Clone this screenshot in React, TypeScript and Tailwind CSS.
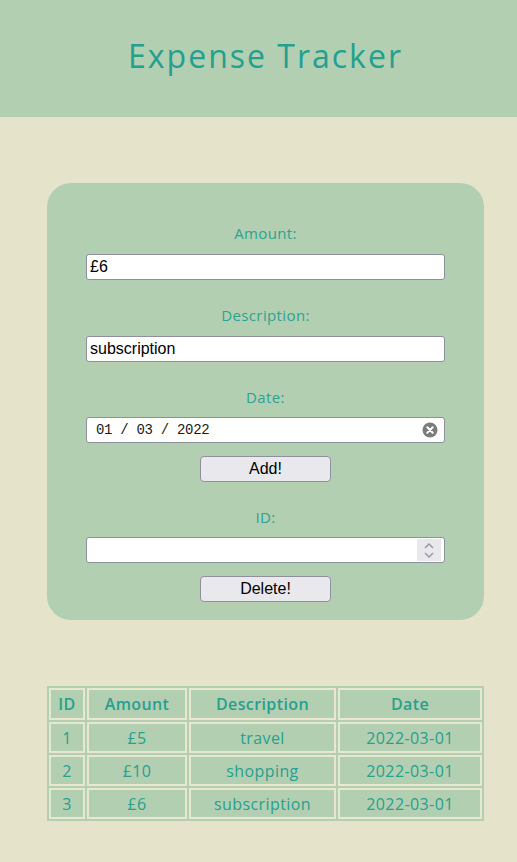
import { useState } from "react";

const rows = [
  { id: 1, amount: "£5", description: "travel", date: "2022-03-01" },
  { id: 2, amount: "£10", description: "shopping", date: "2022-03-01" },
  { id: 3, amount: "£6", description: "subscription", date: "2022-03-01" },
];

const Label = ({ children }: { children: string }) => (
  <label className="block text-center text-[15px] leading-5 tracking-wide text-[#2ba393]">{children}</label>
);

const inputBase =
  "block w-[359px] h-[26px] bg-white border border-[#8f8f9d] rounded-[3px] px-[3px] text-[16px] text-black font-['Liberation_Sans',Arial,sans-serif] outline-none";

const Button = ({ children }: { children: string }) => (
  <button className="block mx-auto w-[131px] h-[26px] bg-[#e9e9ed] border border-[#8f8f9d] rounded-[4px] text-[16px] text-black font-['Liberation_Sans',Arial,sans-serif]">
    {children}
  </button>
);

const App = () => {
  const [amount, setAmount] = useState("£6");
  const [description, setDescription] = useState("subscription");

  return (
    <div className="min-h-screen bg-[#e5e4cb] font-['Open_Sans',sans-serif] pb-10">
      <header className="h-[117px] bg-[#b3cfb1] flex items-center justify-center pl-[14px] pb-[6px]">
        <h1 className="text-[32px] tracking-[2px] text-[#23a090] font-normal">Expense Tracker</h1>
      </header>

      <div className="ml-[47px] w-[437px] mt-[66px] bg-[#b3cfb1] rounded-[24px] pt-[40px] pb-[18px] flex flex-col items-center">
        <Label>Amount:</Label>
        <input className={`${inputBase} mt-[11px]`} value={amount} onChange={(e) => setAmount(e.target.value)} />

        <div className="mt-[25px]">
          <Label>Description:</Label>
        </div>
        <input
          className={`${inputBase} mt-[11px]`}
          value={description}
          onChange={(e) => setDescription(e.target.value)}
        />

        <div className="mt-[25px]">
          <Label>Date:</Label>
        </div>
        <div className={`${inputBase} mt-[10px] flex items-center justify-between pl-[9px] pr-[6px]`}>
          <span className="font-['Liberation_Mono',monospace] text-[14px] tracking-[-0.3px] text-[#1a1a1a]">01 / 03 / 2022</span>
          <svg width="16" height="16" viewBox="0 0 16 16">
            <circle cx="8" cy="8" r="7.5" fill="#7b7b7b" />
            <path d="M5.3 5.3 L10.7 10.7 M10.7 5.3 L5.3 10.7" stroke="white" strokeWidth="2" strokeLinecap="round" />
          </svg>
        </div>

        <div className="mt-[13px]">
          <Button>Add!</Button>
        </div>

        <div className="mt-[25px]">
          <Label>ID:</Label>
        </div>
        <div className={`${inputBase} mt-[10px] flex items-stretch justify-end p-[1px]`}>
          <div className="w-[24px] bg-[#e9e9ed] flex flex-col items-center justify-center gap-[3px]">
            <svg width="10" height="6" viewBox="0 0 10 6">
              <path d="M1 5 L5 1 L9 5" stroke="#9a9aa6" strokeWidth="1.5" fill="none" />
            </svg>
            <svg width="10" height="6" viewBox="0 0 10 6">
              <path d="M1 1 L5 5 L9 1" stroke="#9a9aa6" strokeWidth="1.5" fill="none" />
            </svg>
          </div>
        </div>

        <div className="mt-[13px]">
          <Button>Delete!</Button>
        </div>
      </div>

      <table className="ml-[47px] w-[437px] mt-[66px] bg-[#b3cfb1] border-separate border-spacing-[2px] text-[16px] text-[#26a090] tracking-wide">
        <thead>
          <tr>
            <th className="w-[36px] h-[32px] border-2 border-[#e8e7cf] font-semibold">ID</th>
            <th className="w-[100px] border-2 border-[#e8e7cf] font-semibold">Amount</th>
            <th className="w-[147px] border-2 border-[#e8e7cf] font-semibold">Description</th>
            <th className="border-2 border-[#e8e7cf] font-semibold">Date</th>
          </tr>
        </thead>
        <tbody>
          {rows.map((r) => (
            <tr key={r.id}>
              <td className="h-[31px] border-2 border-[#e8e7cf] text-center leading-5">{r.id}</td>
              <td className="border-2 border-[#e8e7cf] text-center leading-5">{r.amount}</td>
              <td className="border-2 border-[#e8e7cf] text-center leading-5">{r.description}</td>
              <td className="border-2 border-[#e8e7cf] text-center leading-5">{r.date}</td>
            </tr>
          ))}
        </tbody>
      </table>
    </div>
  );
};

export default App;
